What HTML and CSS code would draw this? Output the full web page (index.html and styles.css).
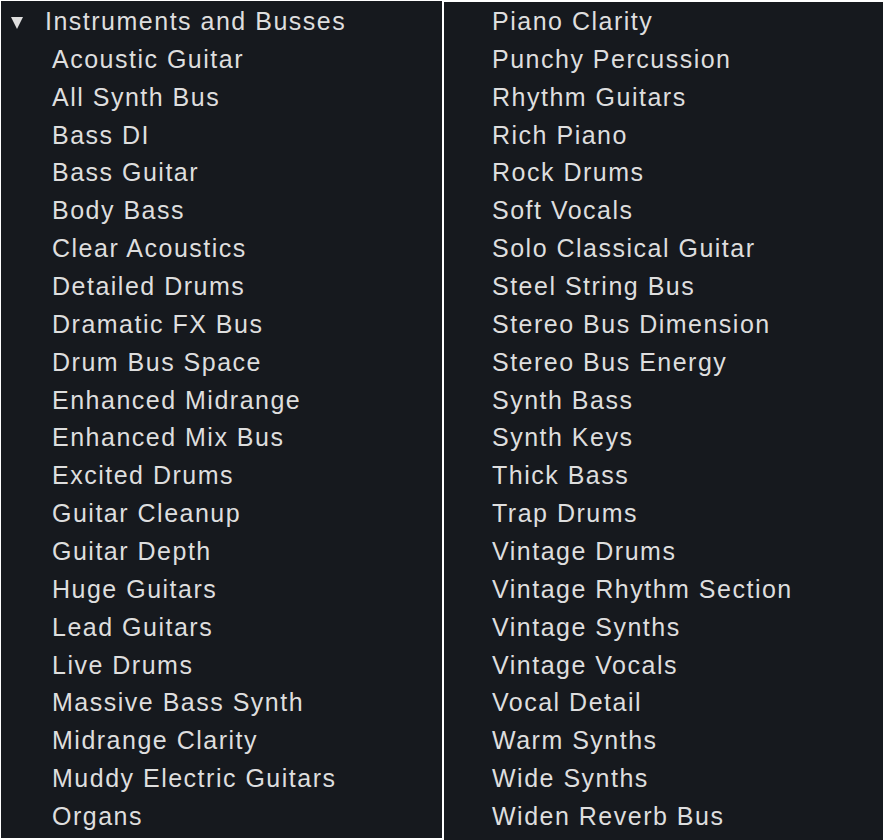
FILE: index.html
```html
<!DOCTYPE html>
<html lang="en">
<head>
    <meta charset="UTF-8">
    <title>Instruments and Busses</title>
    <link rel="stylesheet" href="styles.css">
</head>
<body>
    <div class="preset-browser">
        <!-- левая колонка -->
        <div class="preset-panel left">
            <div class="preset-group">
                <span class="arrow"></span>
                <span class="group-title">Instruments and Busses</span>
            </div>
            <ul class="preset-list">
                <li>Acoustic Guitar</li>
                <li>All Synth Bus</li>
                <li>Bass DI</li>
                <li>Bass Guitar</li>
                <li>Body Bass</li>
                <li>Clear Acoustics</li>
                <li>Detailed Drums</li>
                <li>Dramatic FX Bus</li>
                <li>Drum Bus Space</li>
                <li>Enhanced Midrange</li>
                <li>Enhanced Mix Bus</li>
                <li>Excited Drums</li>
                <li>Guitar Cleanup</li>
                <li>Guitar Depth</li>
                <li>Huge Guitars</li>
                <li>Lead Guitars</li>
                <li>Live Drums</li>
                <li>Massive Bass Synth</li>
                <li>Midrange Clarity</li>
                <li>Muddy Electric Guitars</li>
                <li>Organs</li>
            </ul>
        </div>

        <!-- правая колонка -->
        <div class="preset-panel right">
            <ul class="preset-list">
                <li>Piano Clarity</li>
                <li>Punchy Percussion</li>
                <li>Rhythm Guitars</li>
                <li>Rich Piano</li>
                <li>Rock Drums</li>
                <li>Soft Vocals</li>
                <li>Solo Classical Guitar</li>
                <li>Steel String Bus</li>
                <li>Stereo Bus Dimension</li>
                <li>Stereo Bus Energy</li>
                <li>Synth Bass</li>
                <li>Synth Keys</li>
                <li>Thick Bass</li>
                <li>Trap Drums</li>
                <li>Vintage Drums</li>
                <li>Vintage Rhythm Section</li>
                <li>Vintage Synths</li>
                <li>Vintage Vocals</li>
                <li>Vocal Detail</li>
                <li>Warm Synths</li>
                <li>Wide Synths</li>
                <li>Widen Reverb Bus</li>
            </ul>
        </div>
    </div>
</body>
</html>
```

FILE: styles.css
```css
:root {
    --panel-bg: #16191e;
    --text: #dedede;
    --row: 37.86px;
}

* {
    margin: 0;
    padding: 0;
    box-sizing: border-box;
}

body {
    background: #ffffff;
    font-family: 'Liberation Sans', Arial, sans-serif;
    color: var(--text);
}

.preset-browser {
    display: flex;
    gap: 2px;
    padding: 1px 1px 0 1px;
    height: 840px;
    overflow: hidden;
}

.preset-panel {
    background: var(--panel-bg);
}

.preset-panel.left {
    width: 441px;
    height: 837px;
    padding-top: 2px;
}

.preset-panel.right {
    width: 439px;
    height: 839px;
    margin-top: 1px;
    padding-top: 1px;
}

.preset-group {
    display: flex;
    align-items: center;
    height: var(--row);
    padding-left: 10px;
}

.arrow {
    width: 0;
    height: 0;
    border-left: 6.5px solid transparent;
    border-right: 6.5px solid transparent;
    border-top: 12px solid var(--text);
    margin-right: 22px;
    margin-top: 2px;
}

.group-title,
.preset-list li {
    font-size: 25px;
    letter-spacing: 1.5px;
    white-space: nowrap;
}

.preset-list {
    list-style: none;
}

.preset-list li {
    height: var(--row);
    line-height: var(--row);
}

.left .preset-list li {
    padding-left: 51px;
}

.right .preset-list li {
    padding-left: 48px;
}
```
